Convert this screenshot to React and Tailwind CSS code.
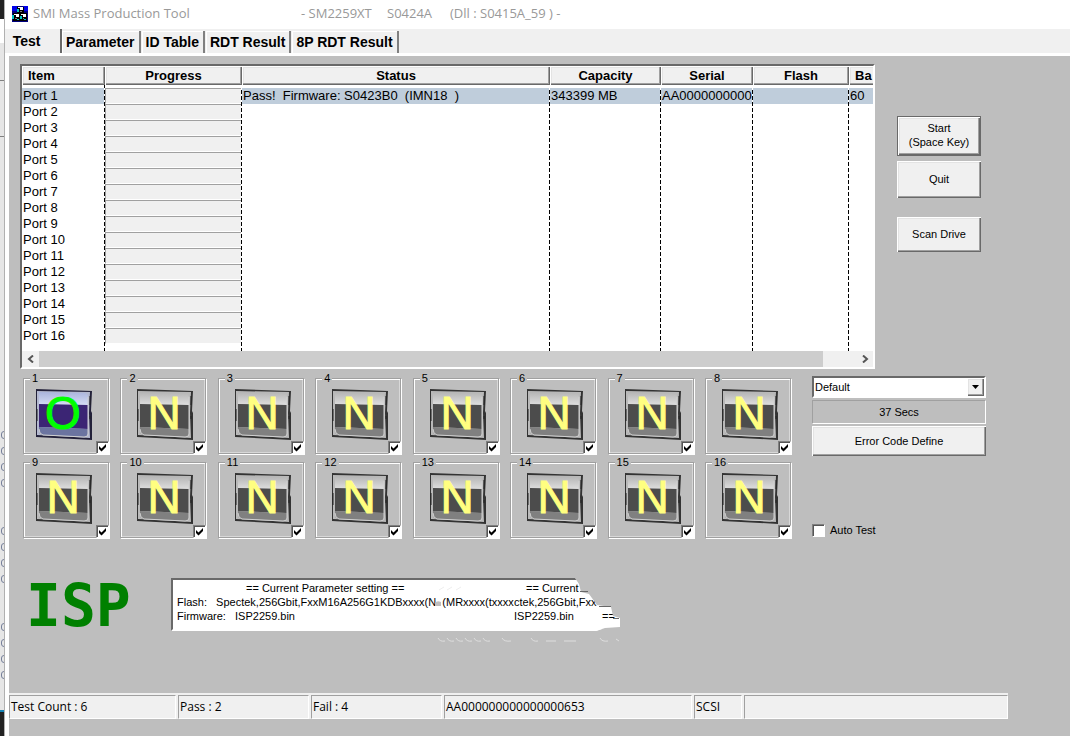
import React, { useState } from 'react';

const ports = Array.from({ length: 16 }, (_, i) => i + 1);

const columns = [
  { title: 'Item', width: 'w-[83px]' },
  { title: 'Progress', width: 'w-[137px]' },
  { title: 'Status', width: 'w-[308px]' },
  { title: 'Capacity', width: 'w-[111px]' },
  { title: 'Serial', width: 'w-[92px]' },
  { title: 'Flash', width: 'w-[96px]' },
  { title: 'Ba', width: 'w-[90px]' },
];

const firstRow = ['', 'Pass!  Firmware: S0423B0  (IMN18  )', '343399 MB', 'AA0000000000', '', '60'];

const tabs = ['Parameter', 'ID Table', 'RDT Result', '8P RDT Result'];

const raised =
  'bg-[#f0f0f0] shadow-[inset_1px_1px_0_#fff,inset_-1px_-1px_0_#696969,inset_-2px_-2px_0_#a0a0a0,inset_2px_2px_0_#e3e3e3]';

const AppIcon = () => (
  <svg width="16" height="16" viewBox="0 0 16 16" shapeRendering="crispEdges" className="shrink-0">
    <path d="M0 0h16v16H0z" fill="#000080" />
    <path d="M0 0h5v5H0zM11 0h5v5h-5z" fill="#0000e8" />
    <path d="M5 1h7v7H5zM1 7h7v8H1zM8 7h7v8H8z" fill="#000" />
    <path d="M6 1h5v1H6zM8 2h3v2H8zM2 8h5v1H2zM4 9h3v2H4zM9 8h5v1H9zM11 9h3v2h-3z" fill="#fff" />
    <path d="M5 3h2v3H5zM0 9h2v4H0zM8 10h2v3H8zM5 13h2v1H5zM12 13h2v1h-2z" fill="#00c8c8" />
    <path d="M8 5h2v1H8zM3 12h2v1H3zM11 12h1v1h-1z" fill="#808080" />
  </svg>
);

const CheckBox = ({ id, label, checked, onChange }) => (
  <span className="relative inline-grid size-[13px] place-items-center">
    <input
      id={id}
      type="checkbox"
      aria-label={label}
      checked={checked}
      onChange={onChange}
      className="peer col-start-1 row-start-1 size-[13px] appearance-none border border-t-[#808080] border-l-[#808080] border-r-white border-b-white bg-white shadow-[inset_1px_1px_0_#555]"
    />
    <svg
      viewBox="0 0 9 9"
      className="pointer-events-none invisible z-10 col-start-1 row-start-1 size-[9px] peer-checked:visible"
    >
      <path d="M1 3v3l2.5 2.5L8 4V1L3.5 5.5z" fill="#000" />
    </svg>
  </span>
);

const PortTile = ({ port }) => {
  const [checked, setChecked] = useState(true);
  const active = port === 1;
  const band = active ? ['#d5dcf4', '#aab4dc', '#3b2574', '#6b74a0'] : ['#dedede', '#b4b4b4', '#4c4c4c', '#808080'];

  return (
    <fieldset className="relative h-[82px] w-[86px] border border-[#a0a0a0] shadow-[1px_1px_0_#fff,inset_1px_1px_0_#fff,inset_-1px_-1px_0_#d8d8d8]">
      <legend className="ml-[6px] bg-[#bebebe] px-[2px] text-[11px] leading-[12px]">{port}</legend>
      <svg width="57" height="55" viewBox="0 -3 57 55" className={`mt-[2px] ${port % 8 === 1 ? 'ml-3' : 'ml-4'}`}>
        <defs>
          <linearGradient id={`shine${port}`} x1="0" y1="0" x2="0" y2="1">
            <stop offset="0" stopColor={band[1]} />
            <stop offset="1" stopColor={band[0]} />
          </linearGradient>
        </defs>
        <path d="M0 0L56 2L55 22L56 24V51L38 50L0 48Z" fill={active ? '#23213a' : '#333'} />
        <path d="M1 2L54 3L53 24L54 49L38 48L1 46Z" fill={active ? '#b4b9d0' : '#b9b9b9'} />
        <path d="M3 3L49 4Q52 5 52 8V16H3Z" fill={`url(#shine${port})`} />
        <path d="M3 15L52 16V40L3 38Z" fill={band[2]} />
        <path d="M3 38L52 40V44Q52 48 49 48L6 46Q3 45 3 41Z" fill={band[3]} />
        <path d="M52 8V45Q52 48 48 48M3 40Q3 45 7 46L48 48" fill="none" stroke="#d0d0d0" />
        <path d="M54 7v9M54 27v3M1 20v12" stroke="#222" />
        <text
          x="27"
          y="40"
          textAnchor="middle"
          fontSize="46"
          fontFamily="Liberation Sans, sans-serif"
          fill={active ? '#00ff00' : '#ffff80'}
          stroke={active ? '#00ff00' : '#ffff80'}
          strokeWidth="1"
        >
          {active ? 'O' : 'N'}
        </text>
      </svg>
      <span className="absolute -right-px -bottom-px flex">
        <CheckBox id={`port-${port}`} label={`Port ${port}`} checked={checked} onChange={() => setChecked(!checked)} />
      </span>
    </fieldset>
  );
};

const PortTable = () => (
  <div className="h-[305px] max-w-[855px] min-w-0 flex-1 overflow-hidden border-2 border-t-[#696969] border-r-white border-b-white border-l-[#696969] bg-white">
    <div className="h-[285px] overflow-hidden">
      <table className="w-[917px] table-fixed border-separate border-spacing-0 text-[13px] leading-4">
        <colgroup>
          {columns.map((col) => (
            <col
              key={col.title}
              className={`${col.width} bg-[repeating-linear-gradient(to_bottom,#000_0_4px,transparent_4px_6px)] bg-[length:1px_100%] bg-right bg-no-repeat`}
            />
          ))}
        </colgroup>
        <thead>
          <tr>
            {columns.map((col, i) => (
              <th
                key={col.title}
                className={`h-[19px] overflow-hidden p-0 whitespace-nowrap ${raised} ${i === 0 || i === 6 ? 'pl-[6px] text-left' : 'text-center'}`}
              >
                {col.title}
              </th>
            ))}
          </tr>
        </thead>
        <tbody>
          <tr className="h-[3px]">
            <td colSpan={7} className="p-0" />
          </tr>
          {ports.map((port) => (
            <tr key={port}>
              <td className="p-0 pr-px">
                <div className={`h-4 pl-px ${port === 1 ? 'bg-[#bfcddb]' : ''}`}>Port {port}</div>
              </td>
              {firstRow.map((text, i) => (
                <td key={i} className="p-0 pr-px">
                  {i === 0 ? (
                    <div className="h-4 border-t border-b border-l border-t-[#a0a0a0] border-b-white border-l-[#a0a0a0] bg-[#f0f0f0]" />
                  ) : (
                    <div className={`h-4 overflow-hidden pl-px whitespace-pre ${port === 1 ? 'bg-[#bfcddb]' : ''}`}>
                      {port === 1 ? text : ''}
                    </div>
                  )}
                </td>
              ))}
            </tr>
          ))}
          <tr className="h-2">
            {columns.map((col) => (
              <td key={col.title} className="p-0" />
            ))}
          </tr>
        </tbody>
      </table>
    </div>
    <div className="flex h-4 bg-[#f0f0f0]">
      <button aria-label="Scroll left" className="grid w-[17px] place-items-center">
        <svg width="8" height="8" viewBox="0 0 8 8">
          <path d="M6 0.5L2 4L6 7.5" fill="none" stroke="#555" strokeWidth="2" />
        </svg>
      </button>
      <div className="flex-1">
        <div className="h-4 w-[96%] bg-[#cdcdcd]" />
      </div>
      <button aria-label="Scroll right" className="grid w-[17px] place-items-center">
        <svg width="8" height="8" viewBox="0 0 8 8">
          <path d="M2 0.5L6 4L2 7.5" fill="none" stroke="#555" strokeWidth="2" />
        </svg>
      </button>
    </div>
  </div>
);

const ParameterBox = () => (
  <div className="relative w-[449px] text-[11px] leading-[14px]">
    <div className="h-[53px] overflow-hidden border-t-2 border-b-2 border-l-2 border-t-[#696969] border-b-white border-l-[#696969] bg-white pt-px pl-1 whitespace-pre [clip-path:polygon(0_0,404px_0,408px_6px,410px_14px,418px_16px,426px_27px,440px_29px,442px_38px,449px_40px,449px_49px,434px_50px,425px_53px,0_53px)]">
      <div className="flex">
        <p className="w-[337px] pl-[69px]">== Current Parameter setting ==</p>
        <p className="pl-3">== Current</p>
      </div>
      <div className="flex">
        <p className="w-[337px]">Flash:   Spectek,256Gbit,FxxM16A256G1KDBxxxx(N  (MRxxxx(txxxx</p>
        <p>ctek,256Gbit,Fxx</p>
      </div>
      <div className="flex">
        <p className="w-[337px]">Firmware:   ISP2259.bin</p>
        <p className="w-[88px]">ISP2259.bin</p>
        <p>==</p>
      </div>
    </div>
    {/* torn edge and smudges */}
    <svg width="470" height="70" viewBox="0 0 470 70" className="pointer-events-none absolute top-0 left-0">
      <path d="M409 13.5h8M428 28.5h12M442 40.5h6" stroke="#696969" fill="none" />
      <path d="M264 25q2-3 6-1v4h-6z" fill="#bebebe" />
      <path
        d="M267 60q2 4 7 3m2-3q2 4 7 3m2-3q2 4 7 3m2-3q2 4 7 3m2-3q2 4 7 3m2-3q2 4 7 3m12-3q2 4 9 3m20-3q2 4 7 3m8 0h10m8 0h12m24-3q2 4 8 3m8-2l3 2"
        stroke="#dedede"
        fill="none"
      />
      <path d="M268 12l5-3m3 3l5-3m4 3l5-3" stroke="#eee" />
    </svg>
  </div>
);

const StatusBar = () => {
  const cell = 'border border-t-[#a0a0a0] border-l-[#a0a0a0] border-r-white border-b-white pl-px leading-[22px]';
  return (
    <footer className="flex h-[26px] max-w-[999px] gap-[2px] bg-[#f0f0f0] pt-[2px] font-['Open_Sans',sans-serif] text-[12px]">
      <div className={`w-[167px] ${cell}`}>Test Count : 6</div>
      <div className={`w-[131px] ${cell}`}>Pass : 2</div>
      <div className={`w-[131px] ${cell}`}>Fail : 4</div>
      <div className={`w-[248px] ${cell}`}>AA000000000000000653</div>
      <div className={`w-[48px] ${cell}`}>SCSI</div>
      <div className={`flex-1 ${cell}`} />
    </footer>
  );
};

// edge of the window lying behind
const BackWindow = () => (
  <div className="flex w-1 shrink-0 flex-col overflow-hidden bg-[#e6e6e6]">
    <div className="h-[19px] bg-[#222]" />
    <div className="h-6 bg-white" />
    <div className="mt-[22px] h-[16px] border-b border-[#808080]" />
    <div className="mt-[38px] h-[18px] border-b border-[#808080]" />
    <div className="flex-1 pt-[294px]">
      {[0, 1, 2].map((block) => (
        <div key={block} className="mb-8 last:mb-4">
          {[0, 1, 2, 3].map((n) => (
            <div key={n} className="h-4">
              <div className="ml-px h-2 w-[6px] rounded-full border border-[#77809a]" />
            </div>
          ))}
        </div>
      ))}
    </div>
    <div className="h-[26px] border-t-2 border-[#1583b5] bg-[#222]" />
  </div>
);

const App = () => {
  const [autoTest, setAutoTest] = useState(false);

  return (
    <div className="flex min-h-screen overflow-hidden bg-[#f0f0f0] font-['Liberation_Sans',Arial,sans-serif] text-black">
      <BackWindow />
      <div className="flex min-w-0 flex-1 flex-col border-l border-[#b0b0b0]">
        <header className="flex h-[29px] items-center bg-white pb-[2px] pl-[7px] font-['Open_Sans',sans-serif] text-[13px] whitespace-pre text-[#999]">
          <AppIcon />
          <h1 className="w-[273px] pl-[5px]">SMI Mass Production Tool</h1>
          <span className="w-[86px]">- SM2259XT</span>
          <span className="w-[63px]">S0424A</span>
          <span>(Dll : S0415A_59 ) -</span>
        </header>

        <nav className="flex h-6 items-end text-[14px] leading-5 font-bold">
          <button className="h-6 w-[57px] border-r-2 border-[#696969] pr-[12px] pb-px">Test</button>
          {tabs.map((tab) => (
            <button key={tab} className="mr-px h-[22px] border-r-2 border-[#808080] px-1 shadow-[inset_1px_1px_0_#fff]">
              {tab}
            </button>
          ))}
        </nav>

        <main className="flex flex-1 flex-col border-t-3 border-l-4 border-t-white border-l-white bg-[#bebebe] pt-2 pb-[17px]">
          <section className="flex gap-[22px] pl-[11px]">
            <PortTable />
            <div className="flex w-[84px] shrink-0 flex-col pt-[52px] text-[11px] leading-[14px]">
              <button className={`h-10 border border-[#696969] pb-[2px] ${raised}`}>
                Start
                <br />
                (Space Key)
              </button>
              <button className={`mt-[5px] h-[37px] pb-[2px] ${raised}`}>Quit</button>
              <button className={`mt-[19px] h-[35px] pb-[2px] ${raised}`}>Scan Drive</button>
            </div>
          </section>

          <section className="flex gap-[21px] pt-[3px] pl-[14px]">
            <div className="grid w-[768px] shrink-0 grid-cols-[repeat(8,86px)] justify-between gap-y-[2px]">
              {ports.map((port) => (
                <PortTile key={port} port={port} />
              ))}
            </div>
            <div className="flex w-[174px] shrink-0 flex-col pt-1 text-[11px] leading-[14px]">
              <div className="relative h-[22px] border-2 border-t-[#696969] border-r-white border-b-white border-l-[#696969] bg-white">
                <select aria-label="Setting" className="block h-[18px] w-full appearance-none pl-px">
                  <option>Default</option>
                </select>
                <span className={`pointer-events-none absolute top-0 right-0 grid h-[18px] w-[17px] place-items-center ${raised}`}>
                  <svg width="7" height="4" viewBox="0 0 7 4">
                    <path d="M0 0h7L3.5 4z" fill="#000" />
                  </svg>
                </span>
              </div>
              <div className="mt-[2px] h-6 border border-t-[#a0a0a0] border-r-white border-b-white border-l-[#a0a0a0] text-center leading-[22px]">
                37 Secs
              </div>
              <button className={`mt-[2px] h-[30px] ${raised}`}>Error Code Define</button>
              <div className="mt-[67px] flex items-center gap-[5px]">
                <CheckBox id="auto-test" checked={autoTest} onChange={() => setAutoTest(!autoTest)} />
                <label htmlFor="auto-test">Auto Test</label>
              </div>
            </div>
          </section>

          <section className="flex gap-10 pt-10 pl-[17px]">
            <p className="w-[105px] font-['DejaVu_Sans_Mono',monospace] text-[58px] leading-[56px] font-bold text-[#008000]">ISP</p>
            <ParameterBox />
          </section>

          <div className="mt-auto">
            <StatusBar />
          </div>
        </main>
      </div>
    </div>
  );
};

export default App;
